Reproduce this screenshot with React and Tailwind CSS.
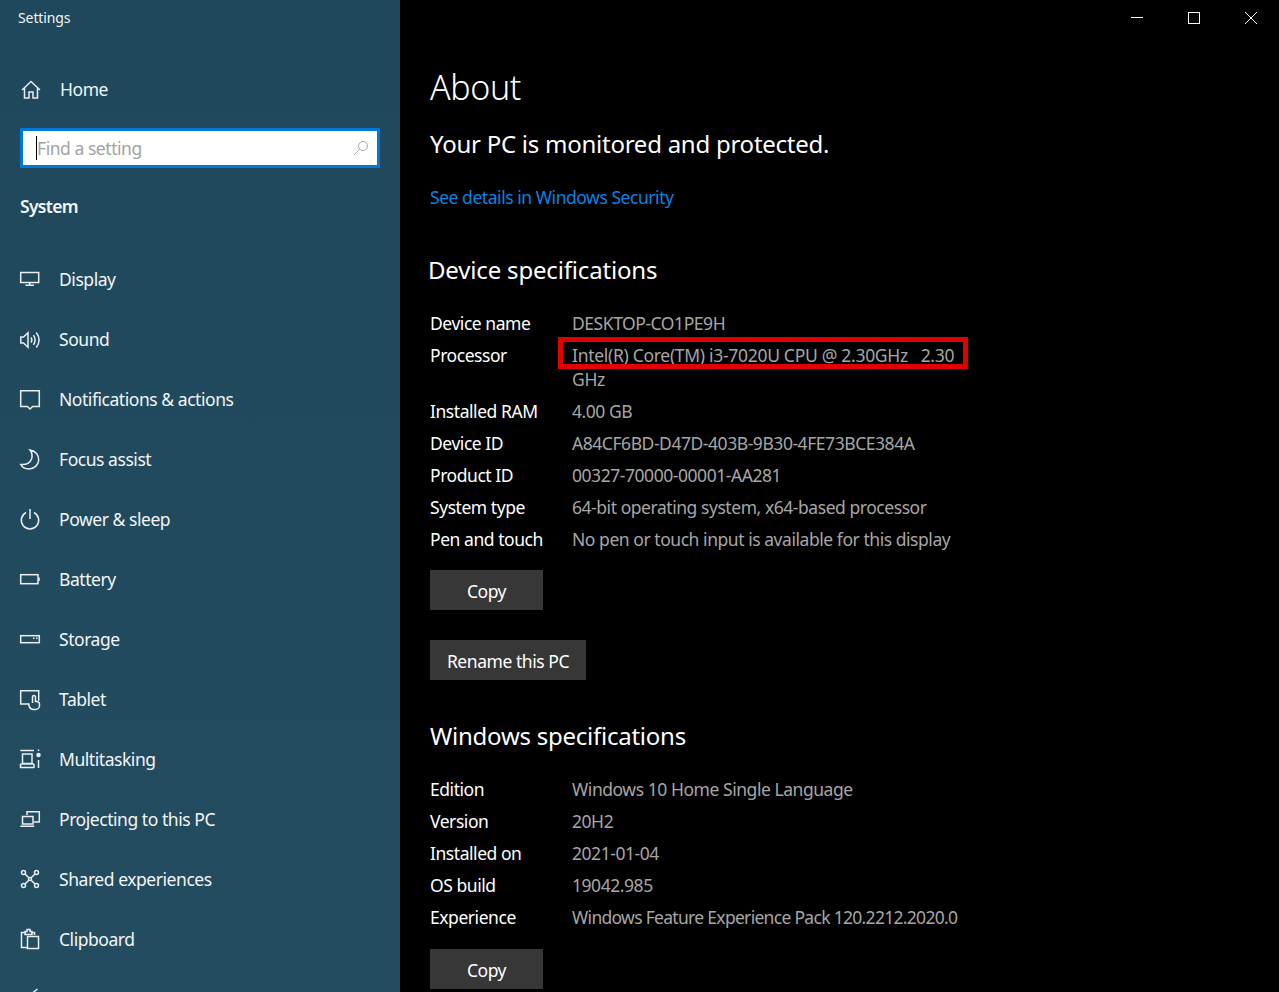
import React from 'react';

const ui = "font-['Noto_Sans',sans-serif]";

// Segoe MDL2 style icons, drawn on a 20x20 box
const icons = {
  home: <path d="M2 10 11 1.500 20 10M4.500 8v10H9v-6h4v6h4.500V8" />,
  display: <><rect x=".7" y="2.500" width="18" height="10" /><path d="M9.700 12.500v3M5.500 15.300h8.400" /></>,
  sound: <><path d="M.8 7h2.700L8 2.800v14.400L3.500 13H.8z" /><path d="M11 7.500c1.100 1.600 1.100 3.400 0 5M13.500 5.200c2 3 2 6.600 0 9.600M16.300 2.500c3.400 4.600 3.400 10.400 0 15" /></>,
  notifications: <path d="M.7.700h18.600v15.800h-6.700L10 19l-2.600-2.500H.7z" />,
  focus: <path d="M10 0c6 1 9 5.500 8.700 10-.2 5-4.700 9-9.700 9-3.500 0-7-2-8.200-4.500 5.200.5 9.200-1.500 10.700-5.500 1-3 .5-6.500-1.500-9z" />,
  power: <><path d="M10-1v10" /><path d="M6 2.500a8.700 8.700 0 1 0 8 0" /></>,
  battery: <><rect x=".7" y="4.700" width="17.300" height="9" /><path d="M19 7.500v3.500" /></>,
  storage: <><rect x=".7" y="5.700" width="18.600" height="7" /><path d="M13 8.300h1.500M16 8.300h1.500" /></>,
  tablet: <><path d="M9 14H.7V.7h18v10" /><path d="M12.500 13V7a1.500 1.500 0 0 1 3 0v4.500h1a3 3 0 0 1 3 3v1a4 4 0 0 1-4 4h-1.500a5 5 0 0 1-5-4v-2" /></>,
  multitasking: <><path d="M.3.500H14M2.500 4H12v9.500H2.500zM.3 14H14M.5 14v4M14 14v4M.3 17.500H14" /><path d="M18.500-.5v1.500" /><circle cx="18.500" cy="5" r="1.500" fill="#e9eef1" /><path d="M18.500 10v8" /></>,
  projecting: <><path d="M7 5V1.700h12.300V12H14" /><path d="M2.500 6.500H13V14H2.500zM.3 16.300h14" /></>,
  shared: <><circle cx="3.500" cy="2.500" r="2" /><circle cx="16.500" cy="2.500" r="2" /><circle cx="3.500" cy="15.500" r="2" /><circle cx="16.500" cy="15.500" r="2" /><circle cx="10" cy="9" r="1.500" /><path d="m5 4 3.800 3.800M15 4l-3.800 3.800M5 14l3.800-3.800M15 14l-3.800-3.800" /></>,
  clipboard: <><path d="M7 17.500H1.500V2.500h4M11 2.500h3.500V5" /><path d="M5 4.500V1.500h2v-2h3v2h2v2h0v1z" /><rect x="7.500" y="6.500" width="11" height="12" /></>,
  remote: <path d="m17.500-1-4.500 3.500" />,
};

function Icon({ name }) {
  return (
    <svg viewBox="0 0 20 20" fill="none" stroke="#e9eef1" strokeWidth="1.500" className="w-5 h-5 shrink-0 overflow-visible">
      {icons[name]}
    </svg>
  );
}

const navItems = [
  ['display', 'Display'],
  ['sound', 'Sound'],
  ['notifications', 'Notifications & actions'],
  ['focus', 'Focus assist'],
  ['power', 'Power & sleep'],
  ['battery', 'Battery'],
  ['storage', 'Storage'],
  ['tablet', 'Tablet'],
  ['multitasking', 'Multitasking'],
  ['projecting', 'Projecting to this PC'],
  ['shared', 'Shared experiences'],
  ['clipboard', 'Clipboard'],
  ['remote', ''],
];

const deviceSpecs = [
  ['Device name', 'DESKTOP-CO1PE9H'],
  ['Installed RAM', '4.00 GB'],
  ['Device ID', 'A84CF6BD-D47D-403B-9B30-4FE73BCE384A'],
  ['Product ID', '00327-70000-00001-AA281'],
  ['System type', '64-bit operating system, x64-based processor'],
  ['Pen and touch', 'No pen or touch input is available for this display'],
];

const windowsSpecs = [
  ['Edition', 'Windows 10 Home Single Language'],
  ['Version', '20H2'],
  ['Installed on', '2021-01-04'],
  ['OS build', '19042.985'],
  ['Experience', 'Windows Feature Experience Pack 120.2212.2020.0'],
];

function SpecRow({ label, value, valueClass = '' }) {
  return (
    <div className="flex py-1 leading-6">
      <div className="w-[142px] shrink-0 text-white">{label}</div>
      <div className={`text-[#a6a6a6] ${valueClass}`}>{value}</div>
    </div>
  );
}

function GrayButton({ className, children }) {
  return (
    <button className={`block h-10 pt-[2px] bg-[#373737] text-white ${className}`}>
      {children}
    </button>
  );
}

export default function App() {
  return (
    <div className={`flex h-[992px] w-full overflow-hidden bg-black text-[17.5px] tracking-[-0.45px] ${ui}`}>
      {/* LEFT: NAV PANE */}
      <div className="w-[400px] shrink-0 overflow-hidden bg-gradient-to-b from-[#20485c] to-[#244c60] text-[#f2f5f6]">
        <div className="pl-[18px] pt-[8px] h-[60px] text-[14px] leading-[20px] tracking-[-0.1px]">Settings</div>
        <div className="flex items-center h-[60px] pl-5">
          <Icon name="home" />
          <span className="ml-[20px] pb-[2px]">Home</span>
        </div>
        <div className="mx-5 mt-[8px] h-10 border-[3px] border-[#0078d7] bg-white flex items-center pl-[13px] pr-[8px]">
          <div className="w-px h-6 bg-black" />
          <span className="flex-1 text-[#a3a3a3]">Find a setting</span>
          <svg viewBox="0 0 16 16" fill="none" stroke="#a8a8a8" strokeWidth="1" className="w-4 h-4">
            <circle cx="10" cy="6" r="4.500" />
            <path d="M6.800 9.200 1 15" />
          </svg>
        </div>
        <div className="pl-5 mt-[26px] h-[60px] font-semibold leading-6 tracking-[-0.7px]">System</div>
        <div className="mt-[-4px]">
          {navItems.map(([icon, label]) => (
            <div key={icon} className="flex items-center h-[60px] pl-5">
              <Icon name={icon} />
              <span className="ml-[19px] pb-[2px]">{label}</span>
            </div>
          ))}
        </div>
      </div>

      {/* RIGHT: ABOUT PAGE */}
      <div className="relative flex-1 pl-[30px] text-white">
        <div className="absolute right-0 top-0 flex h-9 text-white">
          {[
            <path key="min" d="M0 5.500h12" />,
            <rect key="max" x=".5" y=".5" width="11" height="11" />,
            <path key="close" d="m0 0 12 12M12 0 0 12" />,
          ].map((glyph, i) => (
            <div key={i} className="w-[57px] flex items-center justify-center">
              <svg viewBox="0 0 12 12" fill="none" stroke="#fff" strokeWidth="1" className="w-3 h-3">{glyph}</svg>
            </div>
          ))}
        </div>

        <h1 className="pt-[62px] text-[34px] leading-[50px] tracking-[-0.4px] font-light">About</h1>
        <div className="mt-[14px] text-[24px] leading-[36px] tracking-[-0.25px]">Your PC is monitored and protected.</div>
        <div className="mt-[23px] leading-6 text-[#0a84e0]">See details in Windows Security</div>

        <h2 className="mt-[43px] ml-[-2px] text-[24px] leading-[36px] tracking-[-0.17px]">Device specifications</h2>

        <div className="mt-[19px]">
          <SpecRow label={deviceSpecs[0][0]} value={deviceSpecs[0][1]} />
          <div className="relative">
            <SpecRow
              label="Processor"
              valueClass="tracking-[-0.3px]"
              value={<>Intel(R) Core(TM) i3-7020U CPU @ 2.30GHz&nbsp;&nbsp;&nbsp;2.30<br />GHz</>}
            />
            <div className="absolute left-[128px] top-[-2px] w-[410px] h-[32px] border-[5px] border-[#e00000]" />
          </div>
          {deviceSpecs.slice(1).map(([label, value]) => (
            <SpecRow key={label} label={label} value={value} />
          ))}
        </div>

        <GrayButton className="w-[113px] mt-[15px]">Copy</GrayButton>
        <GrayButton className="w-[156px] mt-[30px]">Rename this PC</GrayButton>

        <h2 className="mt-[38px] text-[24px] leading-[36px] tracking-[-0.25px]">Windows specifications</h2>
        <div className="mt-[19px]">
          {windowsSpecs.map(([label, value]) => (
            <SpecRow
              key={label}
              label={label}
              value={value}
              valueClass={label === 'Experience' ? 'tracking-[-0.7px]' : ''}
            />
          ))}
        </div>
        <GrayButton className="w-[113px] mt-[16px]">Copy</GrayButton>
      </div>
    </div>
  );
}
